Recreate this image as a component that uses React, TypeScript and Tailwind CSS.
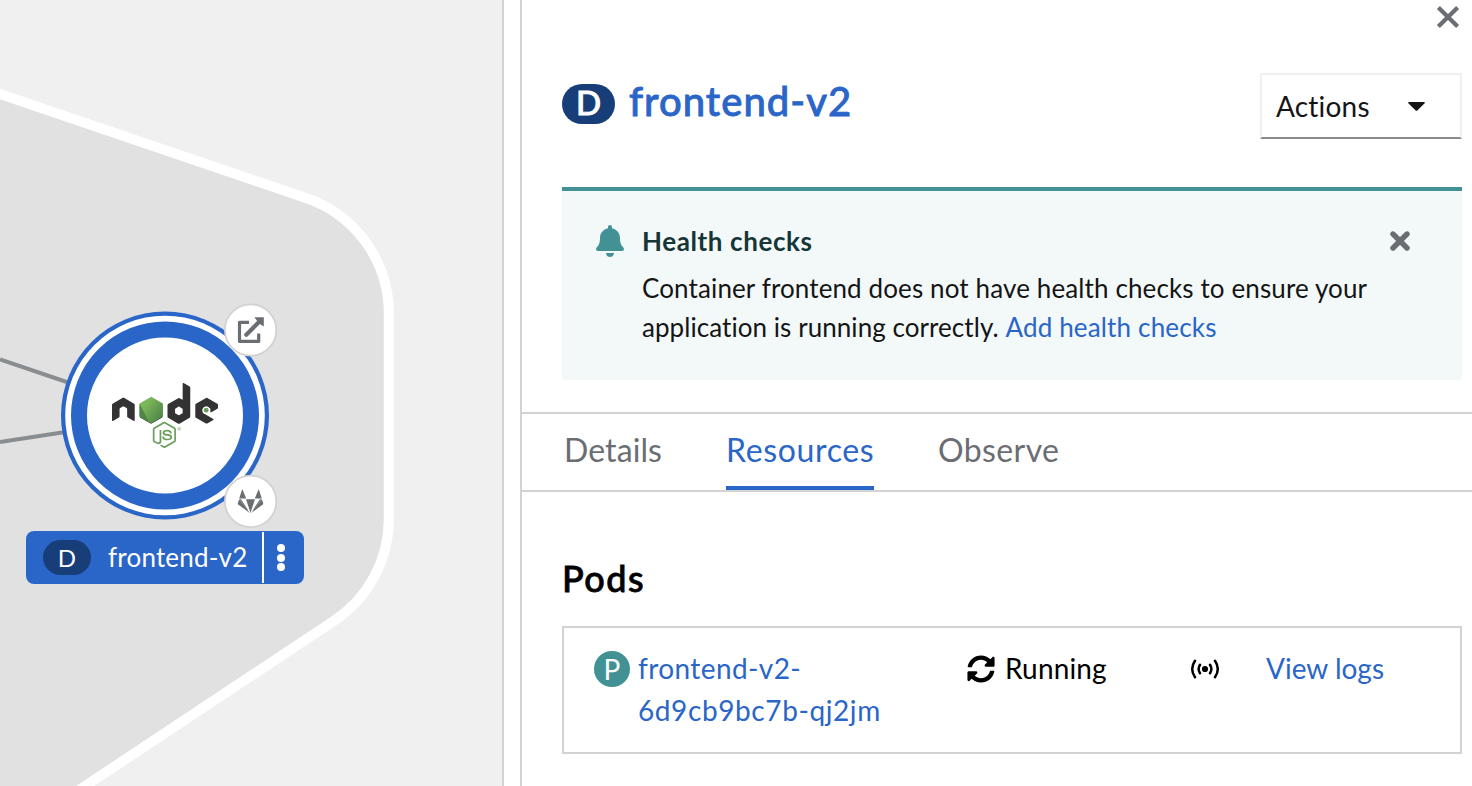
import React from 'react';
import { FaBell, FaNode } from 'react-icons/fa';

const BLUE = '#2a65c8';

function CloseIcon() {
  return (
    <svg width="24" height="24" viewBox="0 0 24 24" aria-hidden="true">
      <path d="M2.4 2.4 21.6 21.6M21.6 2.4 2.4 21.6" stroke="#6a6e73" strokeWidth="4.2" />
    </svg>
  );
}

function TimesIcon() {
  return (
    <svg width="20" height="20" viewBox="0 0 20 20" aria-hidden="true">
      <path d="M3 3 17 17M17 3 3 17" stroke="#6a6e73" strokeWidth="5.4" strokeLinecap="round" />
    </svg>
  );
}

function SyncIcon() {
  return (
    <svg width="28" height="28" viewBox="0 0 512 512" aria-hidden="true">
      <path d="M370.72 133.28C339.458 104.008 298.888 87.962 255.848 88c-77.458.068-144.328 53.178-162.791 126.85-1.344 5.363-6.122 9.15-11.651 9.15H24.103c-7.498 0-13.194-6.807-11.807-14.176C33.933 94.924 134.813 8 256 8c66.448 0 126.791 26.136 171.315 68.685L463.03 40.97C478.149 25.851 504 36.559 504 57.941V192c0 13.255-10.745 24-24 24H345.941c-21.382 0-32.09-25.851-16.971-40.971l41.75-41.749zM32 296h134.059c21.382 0 32.09 25.851 16.971 40.971l-41.75 41.75c31.262 29.273 71.835 45.319 114.876 45.28 77.418-.07 144.315-53.144 162.787-126.849 1.344-5.363 6.122-9.15 11.651-9.15h57.304c7.498 0 13.194 6.807 11.807 14.176C478.067 417.076 377.187 504 256 504c-66.448 0-126.791-26.136-171.315-68.685L48.97 471.03C33.851 486.149 8 475.441 8 454.059V320c0-13.255 10.745-24 24-24z" />
    </svg>
  );
}

function SignalIcon() {
  return (
    <svg width="30" height="20" viewBox="0 0 30 20" fill="none" stroke="#000" strokeWidth="2.5" strokeLinecap="round" aria-hidden="true">
      <circle cx="15" cy="10" r="3.1" fill="#000" stroke="none" />
      <path d="M10 5.8Q7.2 10 10 14.2M20 5.8Q22.8 10 20 14.2M5 1.8Q-.6 10 5 18.2M25 1.8Q30.6 10 25 18.2" />
    </svg>
  );
}

function NodeLogo() {
  return (
    <div className="absolute left-[112px] top-[373px] h-[85px] w-[106px]">
      <FaNode className="absolute inset-0 h-[85px] w-[106px] text-[#333] [clip-path:polygon(0_0,106px_0,106px_55px,78px_55px,52px_46px,28px_55px,0_55px)]" />
      <FaNode className="absolute inset-0 h-[85px] w-[106px] text-[#6a9f5b] [clip-path:polygon(28px_55px,52px_46px,78px_55px,78px_85px,28px_85px)]" />
      <svg className="absolute inset-0" width="106" height="85" viewBox="0 0 106 85" aria-hidden="true">
        <defs>
          <linearGradient id="leaf" x1="0.1" y1="0.1" x2="0.95" y2="0.8">
            <stop offset="0.25" stopColor="#7ab65a" />
            <stop offset="1" stopColor="#4f8546" />
          </linearGradient>
        </defs>
        <path d="M39.2 23.8 50.8 30.4V43.6L39.2 50.4 27.6 43.6V30.4Z" fill="url(#leaf)" />
        <path d="M27.6 31 37.3 49.2 27.6 43.6Z" fill="#4f8546" />
        <circle cx="94.2" cy="37.2" r="3.7" fill="#fff" />
        <circle cx="94.2" cy="37.2" r="2.4" fill="#6a9f5b" />
      </svg>
    </div>
  );
}

function Topology() {
  return (
    <div className="relative h-full w-[504px] shrink-0 overflow-hidden border-r-2 border-[#d2d2d2] bg-[#f0f0f0]">
      <svg className="block" width="502" height="786" viewBox="0 0 502 786" aria-hidden="true">
        <path d="M-40 80.4 306 198A122 122 0 0 1 388.8 313.5V519A122 122 0 0 1 334.3 620.6L40 816H-40Z" fill="#e1e1e1" stroke="#fff" strokeWidth="10" />
        <path d="M0 359.5 80 386.5M0 442 80 429.7" stroke="#8a8d90" strokeWidth="4" />
        <circle cx="165" cy="415.5" r="104" fill={BLUE} />
        <circle cx="165" cy="415.5" r="99.8" fill="#fff" />
        <circle cx="165" cy="415.5" r="86" fill="#fff" stroke={BLUE} strokeWidth="16" />
        <circle cx="250.6" cy="330" r="25.7" fill="#fff" stroke="#d2d2d2" strokeWidth="1.8" />
        <circle cx="250.6" cy="501.4" r="25.7" fill="#fff" stroke="#d2d2d2" strokeWidth="1.8" />
        <g fill="none" stroke="#6a6e73" strokeWidth="3.2" strokeLinejoin="round">
          <path d="M249 322.3H239.5V341.4H258.7V333.5" />
          <path d="M246.3 334.8 260 321" strokeWidth="4.2" strokeLinecap="round" />
          <path d="M254.4 317.2H263.8V326.4L260.6 324.4 256.8 320.6Z" fill="#6a6e73" stroke="none" />
        </g>
        <g fill="#6a6e73">
          <path d="M242.3 489 246.2 498.4H239.2Z" />
          <path d="M258.7 489 261.8 498.4H254.8Z" />
          <path d="M246 499.2H255L250.5 512.9Z" />
          <path d="M239.2 499.2 249.7 512.9 238.2 504.6Q237.6 503.8 238 502.6Z" />
          <path d="M261.8 499.2 251.3 512.9 262.8 504.6Q263.4 503.8 263 502.6Z" />
          <path d="M239.4 499.2H241L248.6 510.8 246 508.5ZM261.6 499.2H260L252.4 510.8 255 508.5Z" />
        </g>
      </svg>

      <NodeLogo />

      <div className="absolute left-[26px] top-[531px] flex h-[53px] w-[278px] items-center rounded-lg bg-[#2a65c8] pl-[17px] text-[26px] text-white">
        <span className="flex h-[35px] w-[48px] items-center justify-center rounded-full bg-[#183e79] text-[24px]">D</span>
        <span className="ml-[17px] w-[154px] whitespace-nowrap leading-[39px] tracking-[0.2px]">frontend-v2</span>
        <span className="h-[51px] w-[2px] bg-white" />
        <span className="ml-[13px] flex flex-col gap-[1.5px]">
          <i className="size-2 rounded-full bg-white" />
          <i className="size-2 rounded-full bg-white" />
          <i className="size-2 rounded-full bg-white" />
        </span>
      </div>
    </div>
  );
}

export default function App() {
  return (
    <div
      className="flex h-[786px] w-[1472px] overflow-hidden bg-white text-[#151515]"
      style={{ fontFamily: 'Lato, "Liberation Sans", sans-serif', fontVariantLigatures: 'none' }}
    >
      <Topology />
      <aside className="ml-4 flex min-w-0 flex-1 flex-col border-l-2 border-[#d2d2d2]">
        <div className="flex h-[73px] justify-end pr-[12px] pt-[5px]">
          <button className="size-6" aria-label="Close"><CloseIcon /></button>
        </div>

        <header className="flex h-[66px] justify-between pl-10 pr-[10px]">
          <h1 className="flex items-start text-[40px] font-medium text-[#2a65c8]">
            <span className="mt-[11px] flex h-10 w-[53px] items-center justify-center rounded-full bg-[#183e79] pb-[2px] text-[33px] text-white [-webkit-text-stroke:0.9px_#fff]">D</span>
            <span className="ml-[14px] mt-[4px] leading-[48px] tracking-[1px] [-webkit-text-stroke:0.8px_#2a65c8]">frontend-v2</span>
          </h1>
          <button className="flex w-[202px] items-center border-2 border-[#f0f0f0] border-b-[#8a8d90] pb-px pl-[14px] text-[28px] tracking-[0.2px]">
            <span className="w-[94px] text-left">Actions</span>
            <svg className="ml-[38px] mt-[2px]" width="17" height="9" viewBox="0 0 17 9" aria-hidden="true">
              <path d="M.8 0H16.2Q17.2.6 16.4 1.4L9.3 8.4Q8.5 9 7.7 8.4L.6 1.4Q-.2.6.8 0Z" fill="#151515" />
            </svg>
          </button>
        </header>

        <section className="ml-10 mr-[10px] mt-12 flex h-[193px] border-t-4 border-[#429295] bg-[#f3f9f9] pl-[34px] pt-[30px] text-[26px] leading-[39px]">
          <FaBell className="mt-[4px] h-8 w-7 shrink-0 text-[#429295]" />
          <div className="ml-[18px] w-[740px] pt-px">
            <h2 className="font-bold tracking-[0.6px] text-[#153536]">Health checks</h2>
            <p className="mt-2 whitespace-nowrap tracking-[0.12px]">
              Container frontend does not have health checks to ensure your
              <br />
              <span className="tracking-[0.06px]">application is running correctly.</span> <a className="tracking-[0.16px] text-[#2a65c8]">Add health checks</a>
            </p>
          </div>
          <button className="ml-[8px] mt-[10px] size-5" aria-label="Dismiss"><TimesIcon /></button>
        </section>

        <nav className="mt-8 flex h-20 gap-[62px] border-y-2 border-[#d2d2d2] pl-[42px] text-[32px] text-[#6a6e73]">
          <a className="flex w-[100px] items-center pb-[5px] tracking-[0.1px]">Details</a>
          <a className="flex w-[148px] items-center border-b-4 border-[#2a65c8] pb-px tracking-[0.65px] text-[#2a65c8]">Resources</a>
          <a className="ml-[2px] flex items-center pb-[5px] tracking-[0.4px]">Observe</a>
        </nav>

        <section className="pl-10 pr-[10px] pt-[62px] text-black">
          <h2 className="text-[36px] font-medium leading-[48px] tracking-[1.5px] [-webkit-text-stroke:0.8px_#000]">Pods</h2>
          <div className="mt-6 flex h-32 border-2 border-[#d2d2d2] pl-[30px] pt-[19px] text-[28px] leading-[42px]">
            <span className="mt-[4px] flex size-9 items-center justify-center rounded-full bg-[#429295] pb-px text-[28px] text-white">P</span>
            <a className="ml-2 w-[329px] text-[#2a65c8]">
              <span className="tracking-[0.4px]">frontend-v2-</span>
              <br />
              <span className="tracking-[0.6px]">6d9cb9bc7b-qj2jm</span>
            </a>
            <span className="mt-[8px] h-7 w-7"><SyncIcon /></span>
            <span className="ml-[10px] w-[185px] tracking-[0.15px]">Running</span>
            <span className="mt-[12px] h-5 w-[30px]"><SignalIcon /></span>
            <a className="ml-[46px] text-[#2a65c8]">View logs</a>
          </div>
        </section>
      </aside>
    </div>
  );
}
